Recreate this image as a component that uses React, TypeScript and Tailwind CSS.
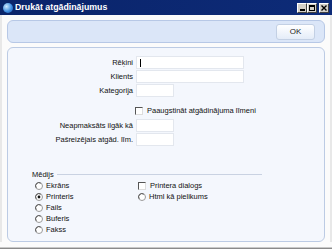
import React from "react";

const font = { fontFamily: '"Liberation Sans", Arial, sans-serif' };

function Radio({ checked = false }: { checked?: boolean }) {
  return (
    <svg width="8" height="8" viewBox="0 0 8 8" className="shrink-0">
      <circle cx="4" cy="4" r="3.5" fill="#fff" stroke="#9a9a9a" strokeWidth="1" />
      <path d="M1.2 5.8 A3.3 3.3 0 0 1 5.8 1.2" fill="none" stroke="#555" strokeWidth="1" />
      {checked && <circle cx="4" cy="4" r="1.4" fill="#111" />}
    </svg>
  );
}

function Check() {
  return (
    <span className="block h-[8px] w-[8px] shrink-0 border-t border-l border-[#555] border-r border-b border-r-[#ddd] border-b-[#ddd] bg-white" />
  );
}

function Field({ label, wide, caret }: { label: string; wide?: boolean; caret?: boolean }) {
  return (
    <div className="flex h-[13px] items-center">
      <span className="w-[126px] pr-[1px] text-right text-[7.5px] leading-none text-[#111]">{label}</span>
      <div
        className={`ml-[2px] flex h-[13px] items-center border border-[#e3e7ee] bg-white ${wide ? "w-[108px]" : "w-[38px]"}`}
      >
        {caret && <span className="ml-[3px] block h-[8px] w-px bg-black" />}
      </div>
    </div>
  );
}

function TitleButton({ children }: { children: React.ReactNode }) {
  return (
    <span className="flex h-[10px] w-[10px] items-center justify-center border-t border-l border-white border-r border-b border-r-[#404040] border-b-[#404040] bg-[#d4d0c8]">
      {children}
    </span>
  );
}

export default function App() {
  return (
    <div className="relative h-[249px] w-[332px] overflow-hidden bg-[#fbfbfb]" style={font}>
      {/* title bar */}
      <div className="flex h-[15px] items-center bg-gradient-to-r from-[#0a246a] to-[#0d2b78] pl-[3px] pr-[3px]">
        <span className="block h-[10px] w-[10px] rounded-full bg-[radial-gradient(circle_at_35%_35%,#cfe8ff,#3d8de0_55%,#1a4fa0)]" />
        <span className="ml-[2px] text-[8.8px] font-bold leading-none text-white">Drukāt atgādinājumus</span>
        <div className="ml-auto flex items-center">
          <TitleButton>
            <span className="mt-[5px] block h-[2px] w-[5px] bg-black" />
          </TitleButton>
          <TitleButton>
            <span className="block h-[6px] w-[6px] border border-t-2 border-black" />
          </TitleButton>
          <span className="w-[2px]" />
          <TitleButton>
            <svg width="6" height="6" viewBox="0 0 6 6">
              <path d="M0.5 0.5 L5.5 5.5 M5.5 0.5 L0.5 5.5" stroke="#000" strokeWidth="1.4" />
            </svg>
          </TitleButton>
        </div>
      </div>

      <div className="flex flex-col border-l-2 border-r-2 border-[#e8e8e8] px-[5px]">
        {/* toolbar */}
        <div className="mt-[5px] flex h-[23px] items-center justify-end rounded-[6px] border border-[#b7c8e6] bg-[#dbe6f8] pr-[9px]">
          <button className="flex h-[16px] w-[39px] items-center justify-center rounded-[3px] border border-[#c3d0e4] bg-gradient-to-b from-[#ffffff] to-[#e4ecf8] text-[8px] leading-none text-[#222]">
            OK
          </button>
        </div>

        {/* main panel */}
        <div className="mt-[4px] flex h-[195px] flex-col rounded-[6px] border border-[#bccbe4] bg-[#f4f7fd] pt-[8px]">
          <div className="flex flex-col gap-[1px]">
            <Field label="Rēķini" wide caret />
            <Field label="Klients" wide />
            <Field label="Kategorija" />
          </div>

          <div className="ml-[127px] mt-[10px] flex h-[8px] items-center gap-[4px]">
            <Check />
            <span className="text-[7.5px] leading-none text-[#111]">Paaugstināt atgādinājuma līmeni</span>
          </div>

          <div className="mt-[4px] flex flex-col gap-[1px]">
            <Field label="Neapmaksāts ilgāk kā" />
            <Field label="Pašreizējais atgād. līm." />
          </div>

          <div className="ml-[24px] mt-[24px] flex h-[9px] items-center">
            <span className="text-[7.5px] leading-none text-[#111]">Mēdijs</span>
            <span className="ml-[3px] block h-px w-[205px] bg-[#c9d2e2]" />
          </div>

          <div className="ml-[27px] mt-[1px] flex">
            <div className="flex w-[103px] flex-col">
              {["Ekrāns", "Printeris", "Fails", "Buferis", "Fakss"].map((t) => (
                <div key={t} className="flex h-[11px] items-center gap-[3px]">
                  <Radio checked={t === "Printeris"} />
                  <span className="text-[7.5px] leading-none text-[#111]">{t}</span>
                </div>
              ))}
            </div>
            <div className="flex flex-col">
              <div className="flex h-[11px] items-center gap-[4px]">
                <Check />
                <span className="text-[7.5px] leading-none text-[#111]">Printera dialogs</span>
              </div>
              <div className="flex h-[11px] items-center gap-[3px]">
                <Radio />
                <span className="text-[7.5px] leading-none text-[#111]">Html kā pielikums</span>
              </div>
            </div>
          </div>
        </div>
      </div>

      {/* bottom frame */}
      <div className="absolute bottom-0 left-0 h-[2px] w-full border-t border-[#c8c8c8] bg-[#8a8a8a]" />
    </div>
  );
}
